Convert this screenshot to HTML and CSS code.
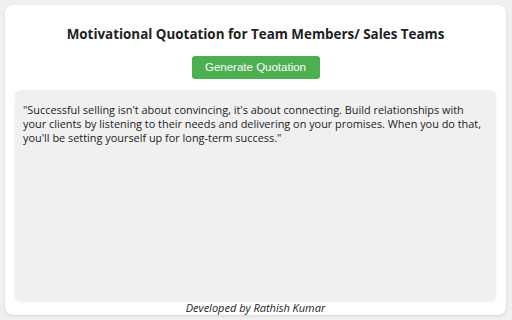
FILE: index.html
```html
<!DOCTYPE html>
<html>
  <head>
    <meta charset="utf-8">
    <title>Motivational Quotation</title>
    <link rel="stylesheet" href="styles.css">
  </head>
  <body>
    <div class="card">
      <h1 class="title">Motivational Quotation for Team Members/ Sales Teams</h1>
      <div class="actions">
        <button class="generate">Generate Quotation</button>
      </div>
      <div class="quote-box">
        <p class="quote">"Successful selling isn't about convincing, it's about connecting. Build relationships with your clients by listening to their needs and delivering on your promises. When you do that, you'll be setting yourself up for long-term success."</p>
      </div>
      <div class="credit">Developed by Rathish Kumar</div>
    </div>
  </body>
</html>
```

FILE: styles.css
```css
body {
    margin: 0;
    padding: 5px 6px 5px 5px;
    background-color: #f0f0f0;
    font-family: "Open Sans", "Noto Sans", sans-serif;
    height: 320px;
    box-sizing: border-box;
}
.card {
    background-color: #fff;
    border-radius: 8px;
    box-shadow: 0 1px 3px rgba(0, 0, 0, 0.12);
    height: 310px;
    box-sizing: border-box;
    padding: 20px 10px 0 10px;
    display: flex;
    flex-direction: column;
}
.title {
    margin: 0;
    text-align: center;
    font-size: 13.4px;
    font-weight: bold;
    color: #222;
    line-height: 18px;
}
.actions {
    text-align: center;
    margin-top: 11px;
}
.generate {
    background-color: #4caf50;
    color: #fff;
    border: none;
    border-radius: 3px;
    font-family: "Liberation Sans", Arial, sans-serif;
    font-size: 11.5px;
    width: 128px;
    height: 23px;
    padding: 0;
}
.quote-box {
    margin-top: 11px;
    background-color: #f0f0f0;
    border-radius: 6px;
    box-shadow: 0 1px 2px rgba(0, 0, 0, 0.08);
    padding: 13px 8px;
    height: 213px;
    box-sizing: border-box;
}
.quote {
    margin: 0;
    font-size: 10.9px;
    line-height: 14px;
    color: #222;
}
.credit {
    text-align: center;
    font-style: italic;
    font-size: 11px;
    line-height: 14px;
    color: #222;
}
```
